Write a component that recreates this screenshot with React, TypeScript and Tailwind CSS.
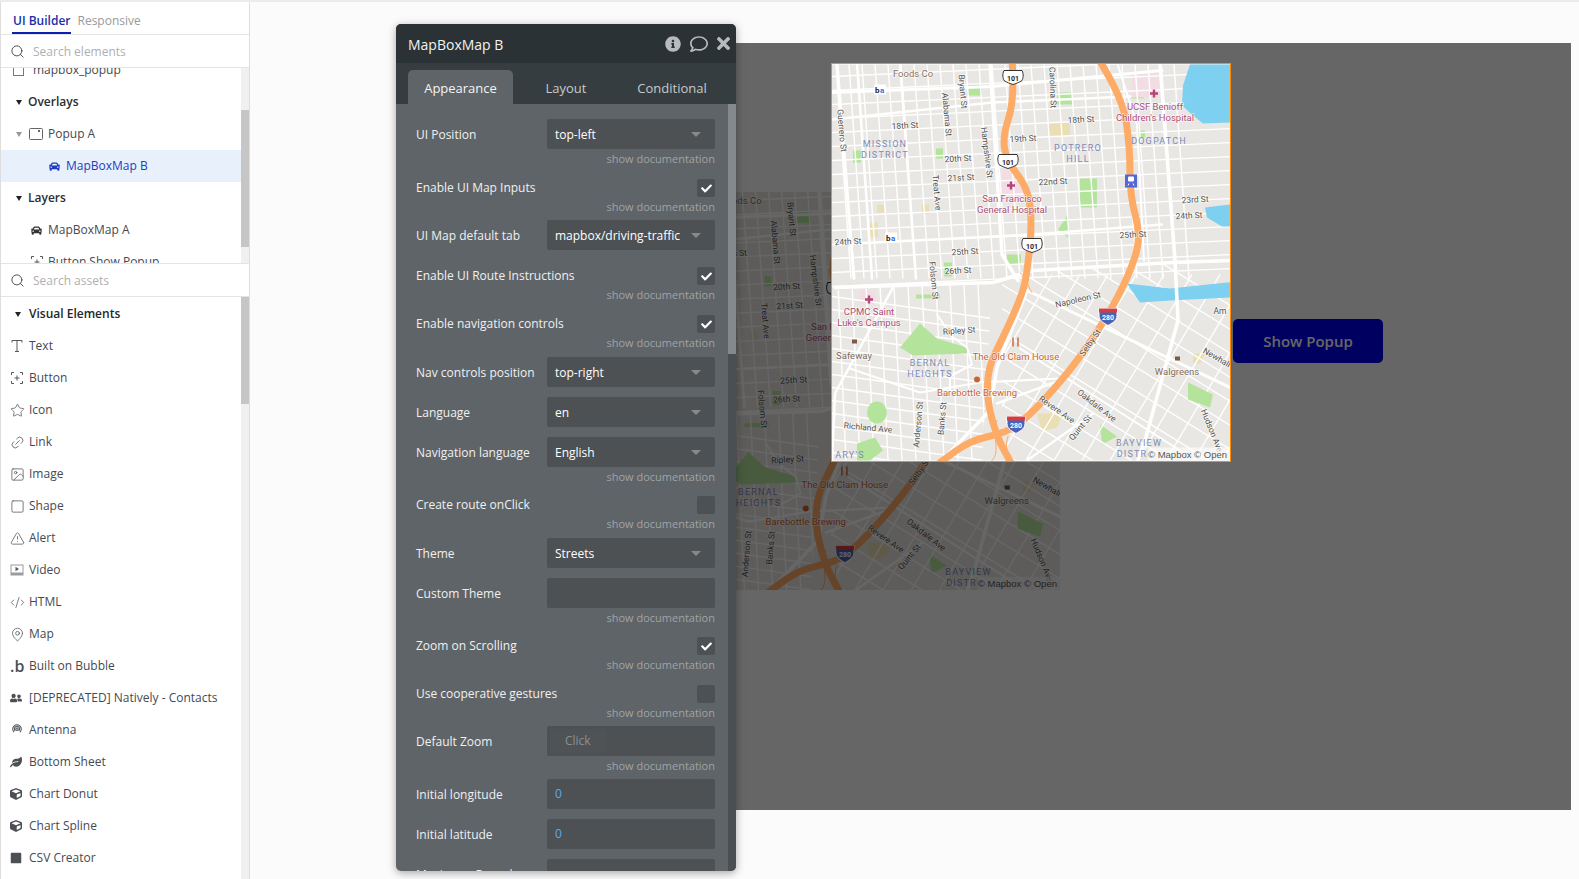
import { Search, Star, Link2, Image, Square, TriangleAlert, CodeXml, MapPin } from 'lucide-react';
import { FaCar, FaCheck, FaCube, FaInfoCircle, FaLeaf, FaRegComment, FaSquare, FaTimes, FaUserFriends } from 'react-icons/fa';

const font = { fontFamily: '"Open Sans", sans-serif' };

// smooth line through points, used for the highways on the map
function smooth(p: number[][]) {
  let d = `M${p[0][0]} ${p[0][1]}`;
  for (let i = 1; i < p.length - 1; i++) {
    const mx = (p[i][0] + p[i + 1][0]) / 2;
    const my = (p[i][1] + p[i + 1][1]) / 2;
    d += ` Q${p[i][0]} ${p[i][1]} ${mx} ${my}`;
  }
  const l = p[p.length - 1];
  return d + ` L${l[0]} ${l[1]}`;
}

const h101 = [[180, -5], [183, 34], [170, 74], [176, 98], [196, 124], [200, 158], [196, 201], [191, 229], [171, 273], [156, 303], [155, 336], [165, 373], [180, 400]];
const h280 = [[268, -3], [291, 34], [298, 84], [298, 131], [308, 168], [303, 196], [281, 243], [248, 293], [221, 326], [195, 353], [175, 368], [138, 376], [108, 398]];

const streetLabels: [string, number, number, number][] = [
  ['Bryant St', 131, 27, 85], ['Carolina St', 221, 23, 88], ['Guerrero St', 10, 66, 85], ['Alabama St', 115, 50, 85],
  ['Hampshire St', 155, 88, 83], ['18th St', 73, 61, -3], ['18th St', 249, 55, -3], ['19th St', 191, 74, -3],
  ['20th St', 126, 94, -3], ['21st St', 129, 113, -3], ['22nd St', 221, 117, -3], ['Treat Ave', 105, 128, 85],
  ['23rd St', 363, 135, -3], ['24th St', 357, 151, -3], ['25th St', 301, 170, -3], ['24th St', 16, 177, -3],
  ['25th St', 133, 187, -3], ['26th St', 126, 206, -3], ['Folsom St', 102, 216, 85], ['Ripley St', 127, 266, -4],
  ['Napoleon St', 246, 235, -13], ['Am', 388, 246, 0], ['Selby St', 258, 278, -55], ['Newhall', 385, 293, 30],
  ['Revere Ave', 225, 345, 35], ['Oakdale Ave', 265, 341, 38], ['Quint St', 248, 363, -50], ['Richland Ave', 36, 363, 5],
  ['Anderson St', 86, 360, -85], ['Banks St', 110, 354, -85], ['Hudson Ave', 380, 366, 68],
];

const areaLabels: [string, number, number][] = [
  ['MISSION', 53, 79], ['DISTRICT', 53, 90], ['POTRERO', 246, 83], ['HILL', 246, 94], ['DOGPATCH', 327, 76],
  ['BERNAL', 98, 298], ['HEIGHTS', 98, 309], ['BAYVIEW', 307, 378], ['DISTR', 300, 389], ["ARY'S", 18, 390],
];

const poiLabels: [string, number, number, string][] = [
  ['Foods Co', 81, 9, '#8d7261'], ['UCSF Benioff', 323, 42, '#ad4d73'], ["Children's Hospital", 323, 53, '#ad4d73'],
  ['San Francisco', 180, 134, '#ad4d73'], ['General Hospital', 180, 145, '#ad4d73'], ['CPMC Saint', 37, 247, '#ad4d73'],
  ["Luke's Campus", 37, 258, '#ad4d73'], ['Safeway', 22, 291, '#7d6a5c'], ['Walgreens', 345, 307, '#7d6a5c'],
  ['The Old Clam House', 184, 292, '#c8642f'], ['Barebottle Brewing', 145, 328, '#c8642f'],
];

function Shield({ x, y, n }: { x: number; y: number; n: string }) {
  if (n === '280') {
    return (
      <g transform={`translate(${x} ${y})`}>
        <path d="M-9 -8 H9 V-1 C9 5 3 7 0 9 C-3 7 -9 5 -9 -1 Z" fill="#4a62b8" stroke="#fff" strokeWidth="1" />
        <path d="M-9 -8 H9 V-4 H-9 Z" fill="#d63c3c" />
        <text y="3" textAnchor="middle" fontSize="7" fontWeight="700" fill="#fff" fontFamily="Roboto, sans-serif">{n}</text>
      </g>
    );
  }
  return (
    <g transform={`translate(${x} ${y})`}>
      <path d="M-9 -7 H9 C11 -3 10 1 9 3 C6 5 3 6 0 7 C-3 6 -6 5 -9 3 C-10 1 -11 -3 -9 -7 Z" fill="#fff" stroke="#333" strokeWidth="1" />
      <text y="3" textAnchor="middle" fontSize="7" fontWeight="700" fill="#222" fontFamily="Roboto, sans-serif">{n}</text>
    </g>
  );
}

function Cross({ x, y }: { x: number; y: number }) {
  return <path d={`M${x - 4} ${y} H${x + 4} M${x} ${y - 4} V${y + 4}`} stroke="#b8457a" strokeWidth="2.4" />;
}

function MapPicture() {
  const verticals = Array.from({ length: 27 }, (_, i) => 4 + i * 13);
  const horizontals = Array.from({ length: 16 }, (_, i) => 12 + i * 14);
  const swLines = Array.from({ length: 14 }, (_, i) => 232 + i * 13);
  const swCross = Array.from({ length: 11 }, (_, i) => 6 + i * 14);
  const seLines = Array.from({ length: 16 }, (_, i) => -60 + i * 24);
  const seCross = Array.from({ length: 12 }, (_, i) => 150 + i * 28);
  return (
    <svg viewBox="0 0 398 396" className="block w-full h-full">
      <defs>
        <clipPath id="sw">
          <path d="M0 226 L160 218 L150 396 L0 396 Z" />
        </clipPath>
        <clipPath id="se">
          <path d="M170 210 L398 195 L398 396 L170 396 Z" />
        </clipPath>
      </defs>
      <rect width="398" height="396" fill="#e9e7e3" />
      {/* parks and blocks */}
      <g fill="#b4e49c">
        <rect x="135" y="20" width="15" height="11" />
        <rect x="225" y="28" width="15" height="12" />
        <rect x="248" y="114" width="17" height="29" />
        <rect x="21" y="86" width="8" height="12" />
        <rect x="104" y="84" width="7" height="10" />
        <rect x="300" y="27" width="12" height="7" />
        <rect x="306" y="66" width="7" height="7" />
        <rect x="175" y="190" width="14" height="10" />
        <rect x="112" y="198" width="8" height="14" />
        <rect x="84" y="230" width="24" height="4" />
        <path d="M226 165 L236 150 L238 175 Z" />
        <path d="M268 360 L285 372 L270 380 Z" />
      </g>
      <g fill="#eadfb4">
        <rect x="217" y="58" width="21" height="13" />
        <rect x="38" y="158" width="8" height="15" />
        <rect x="90" y="140" width="7" height="9" />
        <rect x="45" y="140" width="7" height="8" />
        <path d="M205 349 L231 349 L225 363 L210 367 Z" />
        <path d="M361 289 L373 289 L368 299 L361 299 Z" />
      </g>
      <g fill="#f2dde5">
        <rect x="300" y="8" width="27" height="25" />
        <path d="M170 104 L190 110 L198 124 L198 136 L170 136 Z" />
        <rect x="28" y="226" width="16" height="14" />
      </g>
      {/* street grid */}
      <g stroke="#fff" strokeWidth="1.4" fill="none">
        {verticals.map((x) => <line key={x} x1={x} y1={0} x2={x + 15} y2={214} />)}
        {horizontals.map((y) => <line key={y} x1={0} y1={y} x2={400} y2={y - 18} />)}
        <g clipPath="url(#sw)">
          {swLines.map((y) => <line key={y} x1={0} y1={y} x2={160} y2={y + 22} />)}
          {swCross.map((x) => <line key={x} x1={x} y1={220} x2={x + 8} y2={396} />)}
        </g>
        <g clipPath="url(#se)">
          {seLines.map((y) => <line key={y} x1={170} y1={y + 160} x2={400} y2={y + 302} />)}
          {seCross.map((x) => <line key={x} x1={x + 70} y1={210} x2={x - 40} y2={396} />)}
        </g>
      </g>
      {/* water and the larger parks sit over the grid */}
      <path d="M358 0 L398 0 L398 58 L371 59 L361 51 L350 41 L351 21 Z" fill="#7dd0f0" />
      <path d="M373 143 L398 140 L398 162 L390 162 L375 153 Z" fill="#7dd0f0" />
      <path d="M295 219 L338 224 L395 218 L398 218 L398 233 L338 236 L308 238 Z" fill="#7dd0f0" />
      <g fill="#b4e49c">
        <path d="M68 283 L88 259 L105 274 L135 283 L135 289 L81 291 Z" />
        <ellipse cx="45" cy="348" rx="10" ry="11" />
        <path d="M25 379 L43 373 L51 386 L38 396 L25 396 Z" />
        <path d="M356 318 L381 330 L378 343 L356 335 Z" />
      </g>
      {/* major streets */}
      <g stroke="#fff" fill="none" strokeLinejoin="round" strokeLinecap="round">
        <path d="M5 -2 L22 214" strokeWidth="3" />
        <path d="M25 -2 L40 214" strokeWidth="2.6" />
        <path d="M68 -2 L84 214" strokeWidth="2.6" />
        <path d="M158 -2 L170 190 L186 216" strokeWidth="3.4" />
        <path d="M328 -2 L343 196 L346 256 L313 376 L305 398" strokeWidth="3.6" />
        <path d="M285 -2 L305 60 L312 196" strokeWidth="2" />
        <path d="M0 28 L160 22 L330 6" strokeWidth="3" />
        <path d="M0 55 L160 38 L298 32" strokeWidth="2.4" />
        <path d="M3 180 L200 170 L330 160" strokeWidth="2.4" />
        <path d="M3 223 L161 218 L201 206 L341 198 L398 196" strokeWidth="3.6" />
        <path d="M61 223 L3 329 L0 396" strokeWidth="2.6" />
        <path d="M195 226 L165 303 L158 346 L108 398" strokeWidth="3.4" />
        <path d="M195 226 L398 323" strokeWidth="3" />
        <path d="M18 304 L88 328 L148 318 L228 314" strokeWidth="2.2" />
        <path d="M165 339 L228 316" strokeWidth="2.4" />
        <path d="M188 284 L348 386" strokeWidth="2" />
        <path d="M195 396 L261 349" strokeWidth="2.2" />
        <path d="M105 250 L120 272 L135 283 L140 300 L118 312 L118 330" strokeWidth="2" />
      </g>
      {/* highways */}
      <g stroke="#fdab66" fill="none" strokeLinejoin="round" strokeLinecap="round">
        <path d={smooth(h101)} strokeWidth="7" />
        <path d={smooth(h280)} strokeWidth="7" />
        <path d="M165 356 C158 368 170 386 160 396" strokeWidth="1" />
        <path d="M176 372 C172 382 176 390 180 396" strokeWidth="1" />
        <path d="M188 208 C196 214 196 224 200 228" strokeWidth="1" />
      </g>
      <Shield x={181} y={13} n="101" />
      <Shield x={176} y={97} n="101" />
      <Shield x={200} y={181} n="101" />
      <Shield x={276} y={252} n="280" />
      <Shield x={184} y={360} n="280" />
      {/* transit icons */}
      {[[48, 25], [59, 173]].map(([x, y]) => (
        <g key={x}>
          <rect x={x - 6} y={y - 5} width="12" height="10" fill="#fff" />
          <text x={x - 5} y={y + 3} fontSize="8" fontWeight="700" fill="#222" fontFamily="Roboto, sans-serif">b</text>
          <text x={x} y={y + 3} fontSize="8" fontWeight="700" fill="#3f6bd8" fontFamily="Roboto, sans-serif">a</text>
        </g>
      ))}
      <rect x="293" y="110" width="12" height="13" fill="#5468d4" />
      <rect x="296" y="112" width="6" height="5" rx="1" fill="#fff" />
      <path d="M296 121 L297 119 M302 121 L301 119" stroke="#fff" strokeWidth="1" />
      <Cross x={322} y={29} />
      <Cross x={179} y={121} />
      <Cross x={37} y={235} />
      <path d="M181 273 V282 M186 273 V282" stroke="#c8642f" strokeWidth="1.4" />
      <circle cx="145" cy="315" r="3" fill="#c8642f" />
      <rect x="20" y="275" width="5" height="4" fill="#7d5a44" />
      <rect x="343" y="292" width="5" height="4" fill="#7d5a44" />
      <g fontFamily="Roboto, sans-serif" fontSize="8.5" fill="#55524e">
        {streetLabels.map(([t, x, y, r]) => (
          <text key={t + x} x={x} y={y + 3} textAnchor="middle" transform={`rotate(${r} ${x} ${y})`} stroke="#fff" strokeWidth="1.6" paintOrder="stroke" strokeOpacity="0.7">{t}</text>
        ))}
      </g>
      <g fontFamily="Roboto, sans-serif" fontSize="9" fill="#7d8bb8" letterSpacing="1.2">
        {areaLabels.map(([t, x, y]) => (
          <text key={t} x={x} y={y + 3} textAnchor="middle">{t}</text>
        ))}
      </g>
      <g fontFamily="Roboto, sans-serif" fontSize="9.5">
        {poiLabels.map(([t, x, y, c]) => (
          <text key={t} x={x} y={y + 3} textAnchor="middle" fill={c} stroke="#fff" strokeWidth="1.4" paintOrder="stroke" strokeOpacity="0.7">{t}</text>
        ))}
      </g>
      <rect x="316" y="383" width="82" height="13" fill="#fff" fillOpacity="0.6" />
      <text x="395" y="393" textAnchor="end" fontSize="9.5" fill="#555" fontFamily='"Liberation Sans", sans-serif'>© Mapbox © Open</text>
    </svg>
  );
}

function TextIcon() {
  return (
    <svg viewBox="0 0 14 14" className="w-[14px] h-[14px]" fill="none" stroke="#55595e" strokeWidth="1">
      <path d="M2 3.5 V1.5 H12 V3.5 M7 1.5 V12.5 M5 12.5 H9" />
    </svg>
  );
}

function ButtonIcon() {
  return (
    <svg viewBox="0 0 14 14" className="w-[14px] h-[14px]" fill="none" stroke="#55595e" strokeWidth="1">
      <path d="M4 1.5 H1.5 V4 M10 1.5 H12.5 V4 M4 12.5 H1.5 V10 M10 12.5 H12.5 V10 M7 4.5 V9.5 M4.5 7 H9.5" />
    </svg>
  );
}

function VideoIcon() {
  return (
    <svg viewBox="0 0 14 14" className="w-[14px] h-[14px]">
      <rect x="0.5" y="1.5" width="13" height="11" fill="#9a9c9f" />
      <rect x="1.5" y="2.5" width="11" height="7" fill="#fff" />
      <path d="M5.5 3.8 L9 6 L5.5 8.2 Z" fill="#55595e" />
    </svg>
  );
}

function AntennaIcon() {
  return (
    <svg viewBox="0 0 14 14" className="w-[12px] h-[12px] ml-px" fill="none" stroke="#55595e" strokeWidth="1.3">
      <circle cx="7" cy="6" r="1.4" />
      <path d="M3.5 9.5 A5 5 0 1 1 10.5 9.5 M5 8 A3 3 0 1 1 9 8" />
    </svg>
  );
}

function PopupIcon() {
  return (
    <svg viewBox="0 0 14 12" className="w-[14px] h-[12px]" fill="none" stroke="#666" strokeWidth="1">
      <rect x="0.5" y="0.5" width="13" height="11" rx="1" />
      <rect x="9.5" y="2.5" width="1" height="1" fill="#666" />
    </svg>
  );
}

const stroke = { size: 15, strokeWidth: 1.2, color: '#4f5358' };
const solid = { size: 12, color: '#4c5055' };

const assets = [
  { name: 'Text', icon: <TextIcon /> },
  { name: 'Button', icon: <ButtonIcon /> },
  { name: 'Icon', icon: <Star {...stroke} /> },
  { name: 'Link', icon: <Link2 {...stroke} className="-rotate-45" /> },
  { name: 'Image', icon: <Image {...stroke} /> },
  { name: 'Shape', icon: <Square {...stroke} /> },
  { name: 'Alert', icon: <TriangleAlert {...stroke} /> },
  { name: 'Video', icon: <VideoIcon /> },
  { name: 'HTML', icon: <CodeXml {...stroke} /> },
  { name: 'Map', icon: <MapPin {...stroke} /> },
  { name: 'Built on Bubble', icon: <span className="text-[16px] font-semibold leading-none text-[#4c5055]">.b</span> },
  { name: '[DEPRECATED] Natively - Contacts', icon: <FaUserFriends {...solid} /> },
  { name: 'Antenna', icon: <AntennaIcon /> },
  { name: 'Bottom Sheet', icon: <FaLeaf {...solid} /> },
  { name: 'Chart Donut', icon: <FaCube {...solid} /> },
  { name: 'Chart Spline', icon: <FaCube {...solid} /> },
  { name: 'CSV Creator', icon: <FaSquare {...solid} /> },
];

function Caret({ muted }: { muted?: boolean }) {
  return (
    <span className={`w-0 h-0 border-x-[3.5px] border-x-transparent border-t-[5px] ${muted ? 'border-t-[#999]' : 'border-t-[#222]'}`} />
  );
}

function SearchRow({ placeholder }: { placeholder: string }) {
  return (
    <div className="h-[33px] flex items-center pl-[9px] gap-[8px] border-b border-[#e4e4e4] bg-white">
      <Search size={15} strokeWidth={1.5} color="#444" />
      <span className="text-[12px] text-[#b0b0b0] pt-[2px]">{placeholder}</span>
    </div>
  );
}

function Sidebar() {
  return (
    <div className="w-[250px] shrink-0 h-full flex flex-col bg-white border-l border-r border-[#dedede] text-[12px] text-[#444a52] overflow-hidden">
      <div className="h-[33px] flex items-end pl-[11px] gap-[6px] border-b border-[#e4e4e4]">
        <span className="h-[31px] pt-[8px] leading-[20px] font-semibold text-[#1a2ea8] border-b-2 border-[#0a20b4] px-px">UI Builder</span>
        <span className="h-[31px] pt-[8px] leading-[20px] text-[#9a9a9a]">Responsive</span>
      </div>
      <SearchRow placeholder="Search elements" />
      <div className="h-[196px] flex overflow-hidden border-b border-[#e4e4e4]">
        <div className="flex-1 overflow-hidden">
          <div className="-mt-[14px]">
            <div className="h-8 flex items-center pl-[12px] gap-[9px]">
              <span className="w-[11px] h-[11px] border border-[#777]" />
              <span>mapbox_popup</span>
            </div>
            <div className="h-8 flex items-center pl-[15px] gap-[6px] font-semibold text-[#2a2e33]"><Caret />Overlays</div>
            <div className="h-8 flex items-center pl-[15px]">
              <Caret muted />
              <span className="ml-[7px] flex"><PopupIcon /></span>
              <span className="ml-[5px]">Popup A</span>
            </div>
            <div className="h-8 flex items-center pl-[48px] gap-[6px] bg-[#e8f1fb] text-[#1d3cc0]">
              <FaCar size={11} color="#1d3cc0" />
              <span>MapBoxMap B</span>
            </div>
            <div className="h-8 flex items-center pl-[15px] gap-[6px] font-semibold text-[#2a2e33]"><Caret />Layers</div>
            <div className="h-8 flex items-center pl-[30px] gap-[6px]">
              <FaCar size={11} color="#333" />
              <span>MapBoxMap A</span>
            </div>
            <div className="h-8 flex items-center pl-[29px] gap-[4px]">
              <ButtonIcon />
              <span>Button Show Popup</span>
            </div>
          </div>
        </div>
        <div className="w-2 bg-[#f0f0f0]">
          <div className="mt-[42px] h-[137px] bg-[#c6c6c6]" />
        </div>
      </div>
      <SearchRow placeholder="Search assets" />
      <div className="flex-1 flex overflow-hidden">
        <div className="flex-1 pt-[1px]">
          <div className="h-8 flex items-center pl-[14px] gap-[8px] font-semibold text-[#23272b]"><Caret />Visual Elements</div>
          {assets.map((a) => (
            <div key={a.name} className="h-8 flex items-center pl-[9px]">
              <span className="w-[19px] shrink-0 flex items-center">{a.icon}</span>
              <span>{a.name}</span>
            </div>
          ))}
        </div>
        <div className="w-2 bg-[#f0f0f0]">
          <div className="h-[107px] bg-[#c6c6c6]" />
        </div>
      </div>
    </div>
  );
}

type Row = {
  label: string;
  kind: 'select' | 'check' | 'input' | 'click';
  value?: string;
  checked?: boolean;
  doc?: boolean;
  height: string;
};

const rows: Row[] = [
  { label: 'UI Position', kind: 'select', value: 'top-left', doc: true, height: 'h-[60px]' },
  { label: 'Enable UI Map Inputs', kind: 'check', checked: true, doc: true, height: 'h-[41px]' },
  { label: 'UI Map default tab', kind: 'select', value: 'mapbox/driving-traffic', height: 'h-[47px]' },
  { label: 'Enable UI Route Instructions', kind: 'check', checked: true, doc: true, height: 'h-[48px]' },
  { label: 'Enable navigation controls', kind: 'check', checked: true, doc: true, height: 'h-[42px]' },
  { label: 'Nav controls position', kind: 'select', value: 'top-right', height: 'h-[40px]' },
  { label: 'Language', kind: 'select', value: 'en', height: 'h-[40px]' },
  { label: 'Navigation language', kind: 'select', value: 'English', doc: true, height: 'h-[59px]' },
  { label: 'Create route onClick', kind: 'check', doc: true, height: 'h-[42px]' },
  { label: 'Theme', kind: 'select', value: 'Streets', height: 'h-[40px]' },
  { label: 'Custom Theme', kind: 'input', doc: true, height: 'h-[59px]' },
  { label: 'Zoom on Scrolling', kind: 'check', checked: true, doc: true, height: 'h-[48px]' },
  { label: 'Use cooperative gestures', kind: 'check', doc: true, height: 'h-[41px]' },
  { label: 'Default Zoom', kind: 'click', doc: true, height: 'h-[53px]' },
  { label: 'Initial longitude', kind: 'input', value: '0', height: 'h-[40px]' },
  { label: 'Initial latitude', kind: 'input', value: '0', height: 'h-[40px]' },
  { label: 'Maximum Bounds', kind: 'input', height: 'h-[40px]' },
];

function Control({ row }: { row: Row }) {
  if (row.kind === 'check') {
    return (
      <span className="w-[18px] h-[18px] rounded-[2px] bg-[#4d5154] flex items-center justify-center">
        {row.checked && <FaCheck size={11} color="#fff" />}
      </span>
    );
  }
  if (row.kind === 'select') {
    return (
      <div className="w-[168px] h-[30px] rounded-[2px] bg-[#4d5154] flex items-center justify-between pl-2 pr-[14px] text-white">
        <span className="whitespace-nowrap pt-[2px]">{row.value}</span>
        <span className="w-0 h-0 border-x-[5px] border-x-transparent border-t-[5px] border-t-[#85898c]" />
      </div>
    );
  }
  if (row.kind === 'click') {
    return (
      <div className="w-[168px] h-[30px] rounded-[2px] bg-[#4d5154] flex items-center pl-[3px]">
        <span className="px-[15px] h-6 leading-6 rounded-[3px] bg-[#505356] text-[#8b8f92]">Click</span>
      </div>
    );
  }
  return (
    <div className="w-[168px] h-[30px] rounded-[2px] bg-[#4d5154] flex items-center pl-2 text-[#5fa8f0]">{row.value}</div>
  );
}

function PropertyPanel() {
  return (
    <div className="absolute left-[146px] top-[24px] w-[340px] h-[847px] rounded-[5px] overflow-hidden flex flex-col bg-[#5f6468] shadow-[0_2px_8px_rgba(0,0,0,0.35)] text-[12px]">
      <div className="h-[39px] shrink-0 bg-[#2a3235] flex items-center justify-between pl-3 pr-[3px] text-[#f2f2f2]">
        <span className="text-[14px] pt-px">MapBoxMap B</span>
        <div className="flex items-center">
          <FaInfoCircle size={16} color="#b8bbbd" />
          <FaRegComment size={18} color="#b8bbbd" className="ml-[9px] mr-[6px]" />
          <FaTimes size={19} color="#b8bbbd" />
        </div>
      </div>
      <div className="h-[41px] shrink-0 bg-[#363d41] flex items-end pl-3 text-[13px] text-[#c7cacc]">
        <div className="w-[105px] h-[34px] pt-[3px] rounded-t-[5px] bg-[#5f6468] text-[#f4f4f4] flex items-center justify-center">Appearance</div>
        <div className="w-[106px] h-[34px] pt-[3px] flex items-center justify-center">Layout</div>
        <div className="w-[106px] h-[34px] pt-[3px] flex items-center justify-center">Conditional</div>
      </div>
      <div className="flex-1 flex overflow-hidden">
        <div className="flex-1 overflow-hidden pt-[15px] pl-[20px] text-[#f0f0f0]">
          {rows.map((row) => (
            <div key={row.label} className={`${row.height} w-[299px]`}>
              <div className={`flex justify-between items-center whitespace-nowrap ${row.kind === 'check' ? 'h-[18px]' : 'h-[30px]'}`}>
                <span className={row.kind === 'check' ? '' : 'pt-px'}>{row.label}</span>
                <Control row={row} />
              </div>
              {row.doc && <div className="text-right text-[11px] leading-[20px] text-[#a0a3a6]">show documentation</div>}
            </div>
          ))}
        </div>
        <div className="w-2 bg-[#4b4f52]">
          <div className="h-[250px] bg-[#85898d]" />
        </div>
      </div>
    </div>
  );
}

export default function App() {
  return (
    <div className="h-screen w-full flex overflow-hidden bg-[#fbfbfb] border-t-2 border-[#ececec] box-border" style={font}>
      <Sidebar />
      <div className="relative flex-1 -mt-[2px]">
        {/* page under the popup's dim layer */}
        <div className="absolute left-[250px] top-[43px] w-[1071px] h-[767px] bg-white">
          <div className="absolute left-[160px] top-[149px] w-[400px] h-[398px] overflow-hidden">
            <MapPicture />
          </div>
          <button className="absolute left-[733px] top-[276px] w-[150px] h-[44px] rounded-[5px] bg-[#0000ef] text-white text-[15px] font-semibold">
            Show Popup
          </button>
          <div className="absolute inset-0 bg-black/60" />
          <div className="absolute left-[331px] top-[20px] w-[400px] h-[399px] border border-[#ff8c00] bg-white overflow-hidden">
            <MapPicture />
          </div>
        </div>
        <PropertyPanel />
      </div>
    </div>
  );
}
